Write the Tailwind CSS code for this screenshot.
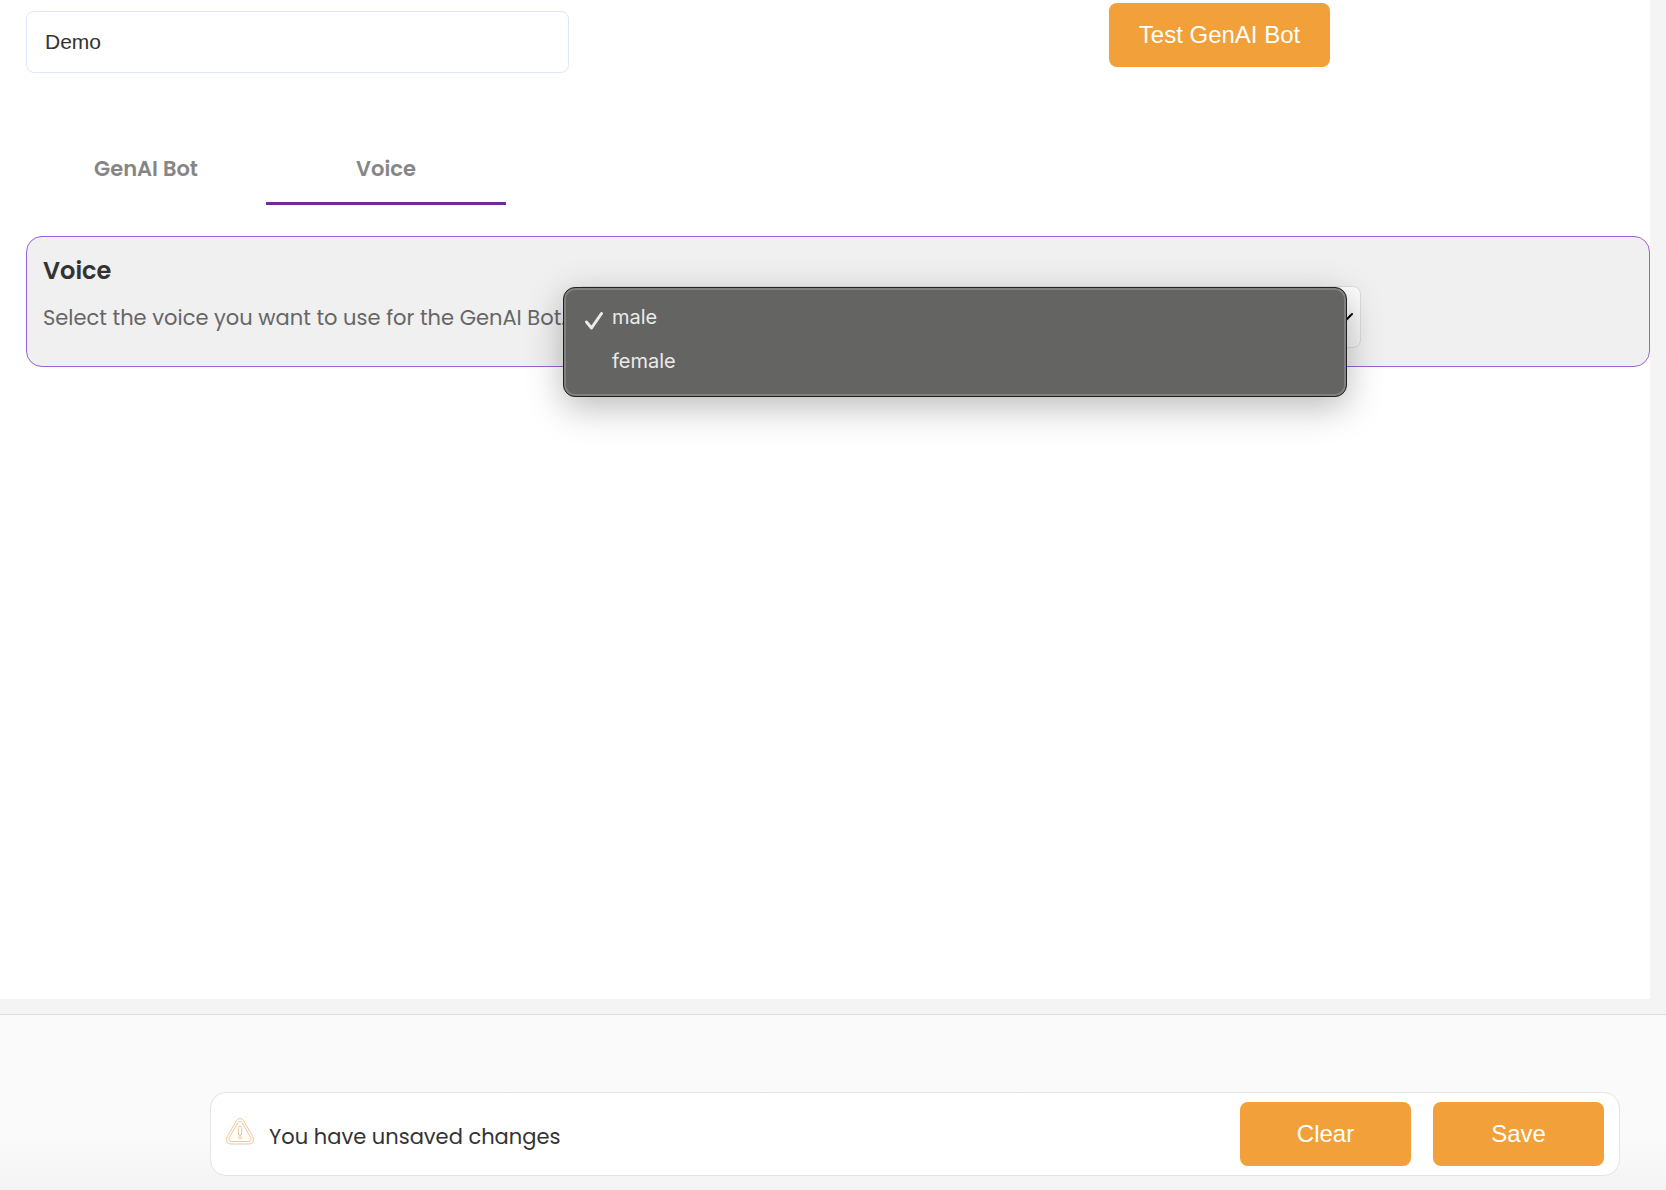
<!DOCTYPE html>
<html lang="en">
<head>
<meta charset="utf-8">
<meta name="viewport" content="width=device-width, initial-scale=1">
<title>GenAI Bot – Voice</title>
<script src="https://cdn.jsdelivr.net/npm/@tailwindcss/browser@4"></script>
</head>
<body class="flex min-h-screen flex-col bg-[#f4f4f4] font-['Poppins','Open_Sans',sans-serif] text-[#333]">
  <main class="mr-4 mb-[15px] flex-1 bg-white pl-[26px]">
    <header class="grid grid-cols-[543px_540px_1fr] items-start">
      <input type="text" aria-label="Bot name" value="Demo" class="col-start-1 mt-[11px] h-[62px] w-full rounded-lg border border-[#e0e6ff] bg-white px-[18px] font-['Liberation_Sans',Arial,sans-serif] text-[21px] text-[#333]">
      <button type="button" class="col-start-3 mt-[3px] h-16 w-[221px] rounded-lg bg-[#f2a03a] font-['Liberation_Sans',Arial,sans-serif] text-2xl text-white">Test GenAI Bot</button>
    </header>

    <nav role="tablist" class="mt-[62px] flex">
      <button type="button" role="tab" aria-selected="false" class="h-[70px] w-60 border-b-3 border-transparent text-[21px] font-semibold text-[#868686]">GenAI Bot</button>
      <button type="button" role="tab" aria-selected="true" class="h-[70px] w-60 border-b-3 border-[#6f2a9d] text-[21px] font-semibold text-[#868686]">Voice</button>
    </nav>

    <section class="mt-[31px] rounded-2xl border border-[#9a62d8] bg-[#f0f0f0] pt-4 pr-[288px] pb-4 pl-4">
      <h2 class="text-2xl leading-9 font-semibold">Voice</h2>
      <div class="-mt-[3px] grid grid-cols-[533px_1fr]">
        <label for="voice" class="text-[21px] leading-16 whitespace-nowrap text-[#666]">Select the voice you want to use for the GenAI Bot.</label>
        <div class="relative h-[62px]">
          <select id="voice" class="h-full w-full appearance-none rounded-lg border border-[#ddd] bg-linear-to-b from-white to-[#f4f4f4] px-4 text-xl">
            <option selected>male</option>
            <option>female</option>
          </select>
          <svg class="absolute top-[26px] right-[7px] h-3 w-4" viewBox="0 0 16 12" fill="none" stroke="#000" stroke-width="2" stroke-linecap="round"><path d="M2 2l6 6 6-6"/></svg>
          <ul role="listbox" aria-label="Voice" class="absolute top-px right-[14px] -left-[13px] h-[110px] rounded-xl border border-[#222] bg-[#646462] py-[7px] font-[Inter,sans-serif] text-xl text-[#ebebeb] shadow-[0_10px_36px_rgba(0,0,0,0.28)] inset-ring-2 inset-ring-[#808080]">
            <li role="option" aria-selected="true" class="flex h-11 items-center gap-2 pl-5">
              <svg class="mt-2 h-5 w-5" viewBox="0 0 20 20" fill="none" stroke="#ebebeb" stroke-width="3" stroke-linecap="round" stroke-linejoin="round"><path d="M2.500 11L7.500 17L17.500 2.500"/></svg>
              male
            </li>
            <li role="option" aria-selected="false" class="flex h-11 items-center pl-12">female</li>
          </ul>
        </div>
      </div>
    </section>
  </main>

  <footer class="border-t border-[#dedede] bg-linear-to-b from-[#fafafa] from-70% to-[#f4f4f4] pt-[77px] pr-[46px] pb-[14px] pl-[210px]">
    <div class="flex h-21 items-center rounded-2xl border border-[#e4e4e4] bg-white pr-[15px] pl-[15px]">
      <svg class="mb-[5px] h-[27px] w-7" viewBox="0 0 28 27" fill="none" stroke="#f5c79c" stroke-width="1" stroke-linejoin="round"><path d="M10.500 2.500Q14-1.500 17.500 2.500L26.700 18.500Q29.500 25.500 23 26H5Q-1.500 25.500 1.300 18.500Z"/><path d="M12 4.500Q14 1.500 16 4.500L24.700 19.500Q26 23.300 23 23.500H5Q2 23.300 3.300 19.500Z"/><path d="M12.200 9.800Q12.200 8.500 14 8.500T15.800 9.800L15.300 17H12.700Z"/><circle cx="14" cy="19.300" r="1.500"/></svg>
      <p class="ml-[15px] flex-1 pt-[6px] text-[21px] leading-8">You have unsaved changes</p>
      <div class="mb-px flex gap-[22px] font-['Liberation_Sans',Arial,sans-serif] text-2xl text-white">
        <button type="button" class="h-16 w-[171px] rounded-lg bg-[#f2a03a]">Clear</button>
        <button type="button" class="h-16 w-[171px] rounded-lg bg-[#f2a03a]">Save</button>
      </div>
    </div>
  </footer>
</body>
</html>
